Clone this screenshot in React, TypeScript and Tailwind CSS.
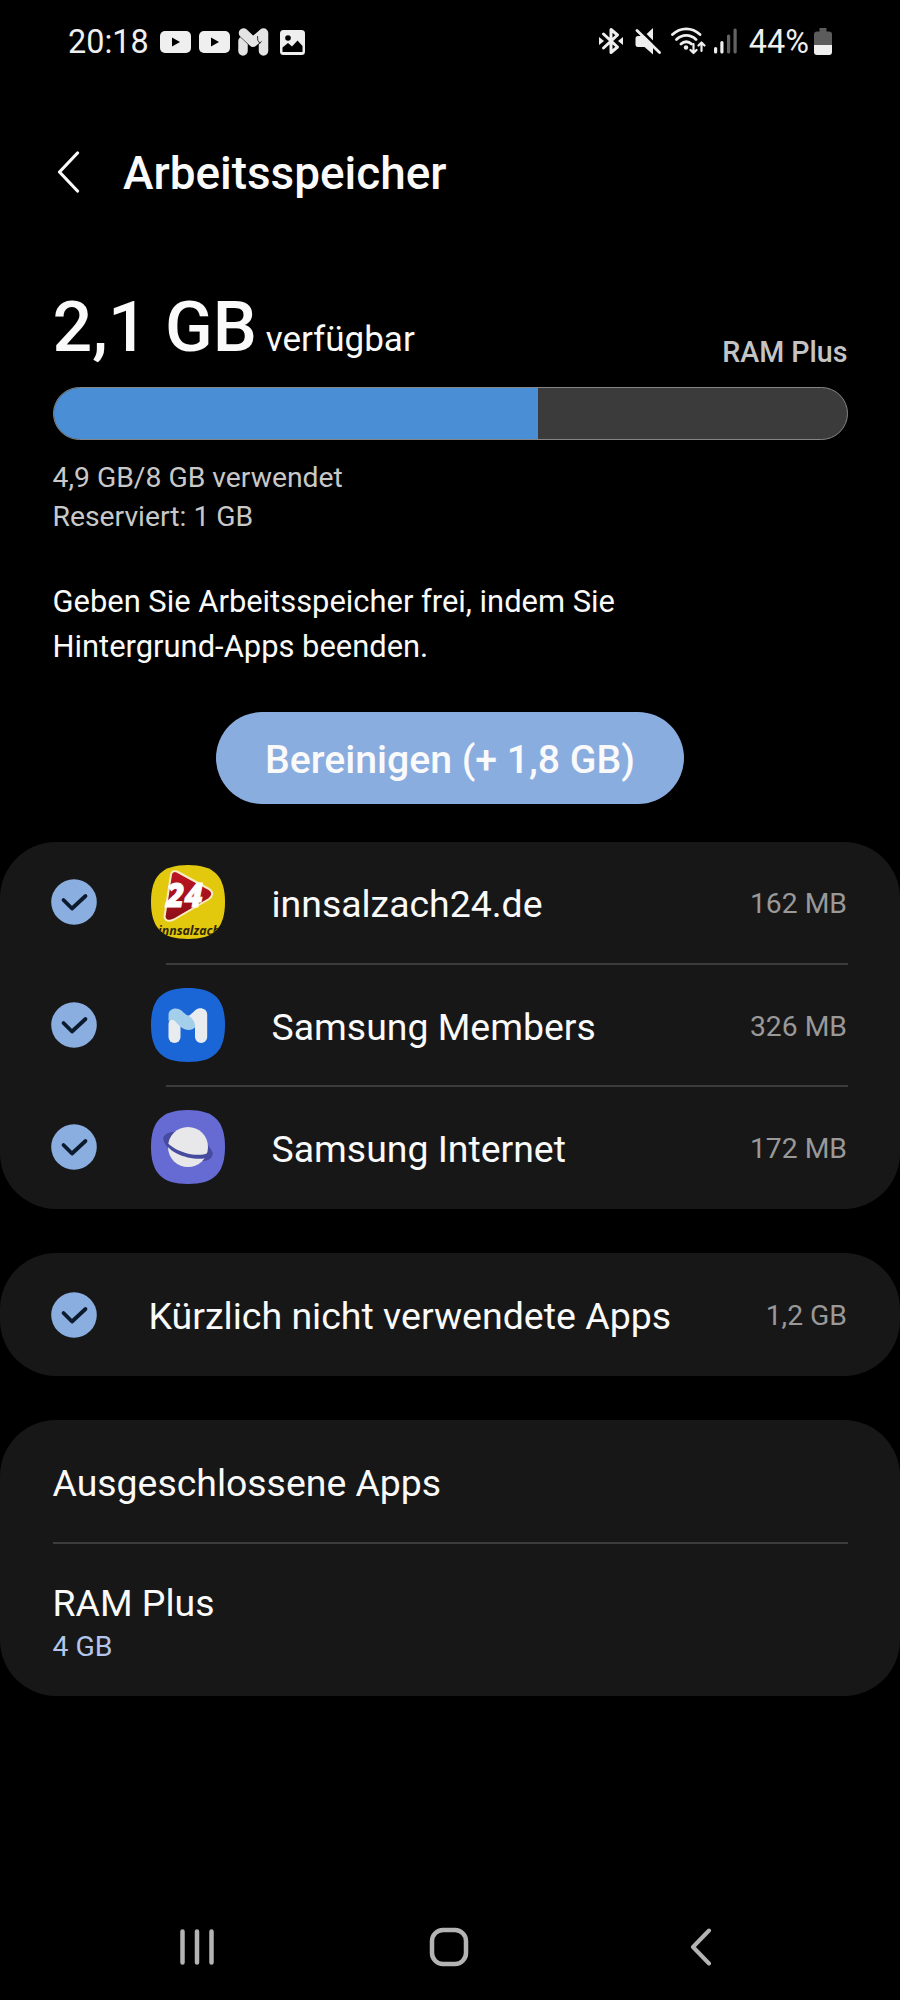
import type { ReactNode } from "react";

const SQUIRCLE = "M37 0C63 0 74 11 74 37S63 74 37 74 0 63 0 37 11 0 37 0Z";

function YoutubeIcon() {
  return (
    <svg width="31" height="22" viewBox="0 0 31 22">
      <rect width="31" height="22" rx="5" fill="#efefef" />
      <path d="M12 6.5v9l8-4.5z" fill="#000" />
    </svg>
  );
}

function MembersStatusIcon() {
  return (
    <svg width="31" height="28" viewBox="0 0 31 28" fill="none" strokeLinecap="round" strokeLinejoin="round">
      <path d="M5 13v10M25.5 5v18" stroke="#e4e4e4" strokeWidth="9.500" />
      <path d="M5.500 5l9.500 9 4-3" stroke="#000" strokeWidth="10.500" />
      <path d="M5.500 5l9.500 9 9.500-8" stroke="#e4e4e4" strokeWidth="9.500" />
      <path d="M19.500 8.500q-.5 4.500 2 6.500" stroke="#000" strokeWidth="0.800" />
    </svg>
  );
}

function PictureIcon() {
  return (
    <svg width="25" height="25" viewBox="0 0 25 25">
      <rect width="25" height="25" rx="3.5" fill="#efefef" />
      <circle cx="8" cy="8" r="2.8" fill="#000" />
      <path d="M2.500 20v-2.500l5.500-4.500 4 3.500 5.500-6 5 5.500V22h-20z" fill="#000" />
    </svg>
  );
}

function BluetoothIcon() {
  return (
    <svg width="24" height="28" viewBox="0 0 24 28" fill="none" stroke="#efefef" strokeWidth="3" strokeLinejoin="round" strokeLinecap="round">
      <path d="M4.500 7L18.500 20 12 25.500V2.500L18.500 8 4.500 21" />
      <path d="M0 10l5 4-5 4zM24 10l-5 4 5 4z" fill="#efefef" stroke="none" />
    </svg>
  );
}

function MuteIcon() {
  return (
    <svg width="26" height="27" viewBox="0 0 26 27">
      <path d="M18 0v26.500L9.500 19H3a2.500 2.500 0 0 1-2.500-2.500v-6A2.500 2.500 0 0 1 3 8h6.500z" fill="#efefef" />
      <path d="M3.500 0l24 24" stroke="#000" strokeWidth="3" />
      <path d="M2 2.500l22.500 22" stroke="#efefef" strokeWidth="2.800" strokeLinecap="round" />
    </svg>
  );
}

function WifiIcon() {
  return (
    <svg width="35" height="28" viewBox="0 0 35 28" fill="none" stroke="#efefef" strokeLinecap="round">
      <path d="M1.500 7.500c8-7.500 19.500-7.500 27.500 0M5.500 12.500c5.500-5.500 14-5.500 19.500 0M10 17c3-3 7.500-3 10.500 0" strokeWidth="2.800" />
      <circle cx="15" cy="20.500" r="2.200" fill="#efefef" stroke="none" />
      <path d="M22.500 17v9M19.500 23l3 3 3-3M30.500 24v-8.500M27.500 18.500l3-3 3 3" strokeWidth="2.200" strokeLinejoin="round" />
    </svg>
  );
}

function SignalIcon() {
  return (
    <svg width="23" height="26" viewBox="0 0 23 26">
      <rect x="0" y="19" width="3.200" height="6.500" rx="1.500" fill="#efefef" />
      <rect x="6.300" y="13" width="3.200" height="12.500" rx="1.500" fill="#efefef" />
      <rect x="13" y="6.500" width="3.200" height="19" rx="1.500" fill="#636363" />
      <rect x="19.500" y="0.500" width="3.200" height="25" rx="1.500" fill="#636363" />
    </svg>
  );
}

function BatteryIcon() {
  return (
    <svg width="18" height="27" viewBox="0 0 18 27">
      <path d="M5.500 0h7v3.500H15a3 3 0 0 1 3 3V17H0V6.500a3 3 0 0 1 3-3h2.500z" fill="#5c5c5c" />
      <path d="M0 17h18v7a3 3 0 0 1-3 3H3a3 3 0 0 1-3-3z" fill="#efefef" />
    </svg>
  );
}

function StatusBar() {
  return (
    <div className="flex h-[82px] shrink-0 items-center justify-between pr-[68px] pl-[68px] text-[32.4px] leading-none text-[#efefef]">
      <div className="flex items-center">
        <span className="w-[92px] pt-0.5">20:18</span>
        <div className="flex items-center gap-2 pt-0.5">
          <YoutubeIcon />
          <YoutubeIcon />
          <MembersStatusIcon />
          <span className="pl-[3px]">
            <PictureIcon />
          </span>
        </div>
      </div>
      <div className="flex items-center">
        <BluetoothIcon />
        <span className="ml-3">
          <MuteIcon />
        </span>
        <span className="ml-2.5">
          <WifiIcon />
        </span>
        <span className="ml-2">
          <SignalIcon />
        </span>
        <span className="ml-3 pt-0.5">44%</span>
        <span className="ml-[5px]">
          <BatteryIcon />
        </span>
      </div>
    </div>
  );
}

function Check() {
  return (
    <svg width="46" height="46" viewBox="0 0 46 46" className="shrink-0">
      <circle cx="23" cy="23" r="22.800" fill="#8aaee0" />
      <path d="M12.500 21l8.500 8.500L34.500 17" fill="none" stroke="#0b1a2c" strokeWidth="3.800" strokeLinecap="round" strokeLinejoin="round" />
    </svg>
  );
}

function InnsalzachIcon() {
  return (
    <svg width="74" height="74" viewBox="0 0 74 74">
      <defs>
        <clipPath id="inn-clip">
          <path d={SQUIRCLE} />
        </clipPath>
        <linearGradient id="inn-red" x1="0" y1="0" x2="0" y2="1">
          <stop offset="0" stopColor="#bd1622" />
          <stop offset="0.5" stopColor="#a5121d" />
          <stop offset="1" stopColor="#8d0f18" />
        </linearGradient>
      </defs>
      <g clipPath="url(#inn-clip)">
        <rect width="74" height="74" fill="#e3c90d" />
        <path
          d="M20 9.500q1-4.500 6-3L58 24q6.500 4.500 0 10L23 54.500q-8 3.500-9.500-2.500z"
          fill="url(#inn-red)"
          stroke="#f7ecc4"
          strokeWidth="2"
          strokeLinejoin="round"
        />
        <text
          x="15"
          y="42"
          fill="#fff"
          stroke="#fff"
          strokeWidth="0.800"
          fontFamily="Open Sans"
          fontSize="33"
          fontWeight="800"
          fontStyle="italic"
          textLength="37"
          lengthAdjust="spacingAndGlyphs"
        >
          24
        </text>
        <text x="7" y="70" fill="#2d2506" fontFamily="Open Sans" fontSize="13" fontWeight="700" fontStyle="italic" textLength="62" lengthAdjust="spacingAndGlyphs">
          innsalzach
        </text>
      </g>
    </svg>
  );
}

function MembersIcon() {
  return (
    <svg width="74" height="74" viewBox="0 0 74 74" fill="none" strokeLinecap="round" strokeLinejoin="round">
      <path d={SQUIRCLE} fill="#1b66d6" />
      <path d="M23.500 36v13" stroke="#e9ecef" strokeWidth="12" />
      <path d="M17.500 27v6q4-2.500 7 0.500Q31 42 37.500 42q5 0 7.500-4V29l-3.500-4q-2 2.500-4 2.500t-5-3l-2-2c-5-4-13-2-13 4.500z" fill="#a3cfea" />
      <path d="M44 36.500V49a6 6 0 0 0 12.200 0V26.500c0-6-7.500-8-11.700-4.500L38 28q5 3.500 6 8.500z" fill="#e9ecef" />
    </svg>
  );
}

function InternetIcon() {
  return (
    <svg width="74" height="74" viewBox="0 0 74 74">
      <path d={SQUIRCLE} fill="#666bd3" />
      <ellipse cx="37" cy="36.500" rx="26" ry="12" transform="rotate(22 37 36.500)" fill="#464b9f" />
      <circle cx="37" cy="37" r="20" fill="#e8e8ea" />
      <path d="M12.300 26C15 37.500 41 49.500 57.500 43L61.800 42C62 55 14 49 12.300 27z" fill="#464b9f" />
    </svg>
  );
}

interface MemoryApp {
  name: string;
  size: string;
  icon: ReactNode;
}

const apps: MemoryApp[] = [
  { name: "innsalzach24.de", size: "162 MB", icon: <InnsalzachIcon /> },
  { name: "Samsung Members", size: "326 MB", icon: <MembersIcon /> },
  { name: "Samsung Internet", size: "172 MB", icon: <InternetIcon /> },
];

function AppRow({ app }: { app: MemoryApp }) {
  return (
    <div className="flex h-[120.5px] items-center pr-[53px] pl-[51px]">
      <Check />
      <div className="ml-[54px] shrink-0">{app.icon}</div>
      <span className="ml-[46.5px] grow pt-[5px] text-[37.4px] leading-none">{app.name}</span>
      <span className="pt-1 text-[28.3px] leading-none text-[#999]">{app.size}</span>
    </div>
  );
}

function NavigationBar() {
  return (
    <div className="mt-auto flex h-[106px] items-center pl-[179px]">
      <svg width="36" height="38" viewBox="0 0 36 38" stroke="#b4b4b4" strokeWidth="4.500" strokeLinecap="round">
        <path d="M3.500 3.500v31M18 3.500v31M32.500 3.500v31" />
      </svg>
      <svg width="40" height="40" viewBox="0 0 40 40" className="ml-[214px]">
        <rect x="3" y="3" width="34" height="34" rx="11" fill="none" stroke="#b4b4b4" strokeWidth="4.500" />
      </svg>
      <svg width="22" height="38" viewBox="0 0 22 38" fill="none" stroke="#b4b4b4" strokeWidth="4" strokeLinecap="round" strokeLinejoin="round" className="ml-[221px]">
        <path d="M19 2.500L3 19l16 16.500" />
      </svg>
    </div>
  );
}

export default function App() {
  return (
    <div className="flex h-[2000px] w-[900px] flex-col overflow-hidden bg-black font-[Roboto,sans-serif] text-[#fafafa]">
      <StatusBar />

      <header className="flex h-[184px] shrink-0 items-center pl-[57px]">
        <svg width="24" height="42" viewBox="0 0 24 42" fill="none" stroke="#fafafa" strokeWidth="3.200" strokeLinecap="round" strokeLinejoin="round" className="mb-1">
          <path d="M20.500 2L2.500 21l18 19" />
        </svg>
        <h1 className="ml-[42px] text-[45.9px] leading-none font-medium">Arbeitsspeicher</h1>
      </header>

      <section className="px-[52.5px]">
        <div className="flex h-[102px] items-end justify-between">
          <p className="text-[35px] leading-[56px]">
            <span className="text-[70px] font-medium">2,1 GB</span> verfügbar
          </p>
          <span className="text-[28.6px] leading-8 font-medium text-[#c4c4c4]">RAM Plus</span>
        </div>
        <div className="mt-[19px] h-[53px] overflow-hidden rounded-full border border-[#858585] bg-[#3b3b3b]">
          <div className="h-full w-[484px] bg-[#4a8fd6]" />
        </div>
        <div className="mt-[19px] text-[28.3px] leading-[38.5px] text-[#c8c8c8]">
          <p>4,9 GB/8 GB verwendet</p>
          <p>Reserviert: 1 GB</p>
        </div>
        <p className="mt-[43px] w-[640px] text-[30.9px] leading-[45px]">
          Geben Sie Arbeitsspeicher frei, indem Sie Hintergrund-Apps beenden.
        </p>
        <button className="mx-auto mt-[43px] block h-[92px] w-[468px] rounded-full bg-[#8aade0] pt-1 text-[39.2px] font-medium">
          Bereinigen (+ 1,8 GB)
        </button>
      </section>

      <section className="mt-[38px] h-[367px] shrink-0 rounded-[56px] bg-[#171717]">
        {apps.map((app, i) => (
          <div key={app.name}>
            {i > 0 && <div className="mr-[52px] ml-[166px] h-0.5 bg-[#3c3c3c]" />}
            <AppRow app={app} />
          </div>
        ))}
      </section>

      <section className="mt-11 flex h-[123px] shrink-0 items-center rounded-[56px] bg-[#171717] pr-[53px] pl-[51px]">
        <Check />
        <span className="ml-[51.5px] grow pt-1 text-[37.5px] leading-none">Kürzlich nicht verwendete Apps</span>
        <span className="pt-1 text-[28.3px] leading-none text-[#999]">1,2 GB</span>
      </section>

      <section className="mt-11 h-[276px] shrink-0 rounded-[56px] bg-[#171717] px-[52.5px]">
        <div className="flex h-[122px] items-center pt-1.5 text-[37.4px] leading-none">Ausgeschlossene Apps</div>
        <div className="h-0.5 bg-[#3c3c3c]" />
        <div className="pt-[38px]">
          <p className="text-[37.4px] leading-[42px]">RAM Plus</p>
          <p className="mt-1.5 text-[28.4px] leading-[34px] text-[#b3c5ea]">4 GB</p>
        </div>
      </section>

      <NavigationBar />
    </div>
  );
}
